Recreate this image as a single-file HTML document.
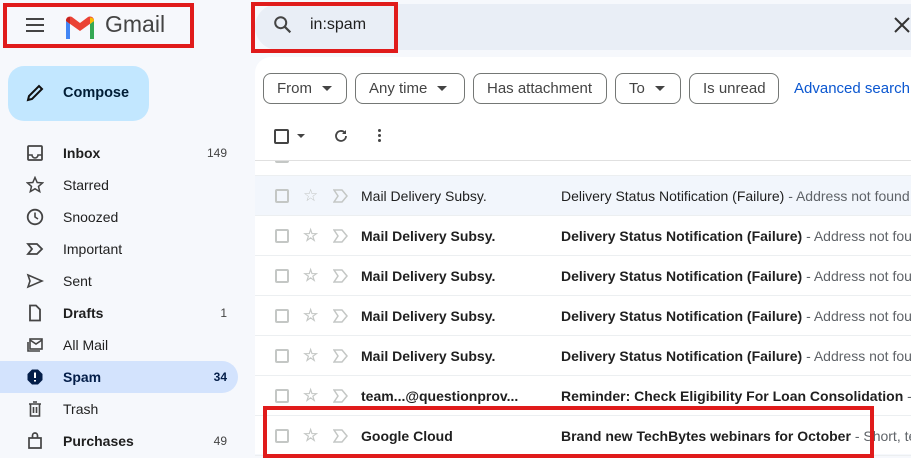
<!DOCTYPE html>
<html><head><style>
*{margin:0;padding:0;box-sizing:border-box}
body{width:911px;height:454px;overflow:hidden;background:#f6f8fc;font-family:"Liberation Sans",Arial,sans-serif;color:#1f1f1f;position:relative}
.abs{position:absolute}
.red{position:absolute;border:4px solid #e01b1b}
.nav{position:absolute;left:0;width:238px;height:32px;display:flex;align-items:center;font-size:14px}
.nav .ic{position:absolute;left:26px;top:7px;width:18px;height:18px}
.nav .t{position:absolute;left:63px}
.nav .c{position:absolute;right:11px;font-size:12px;color:#444}
.b{font-weight:bold}
.chip{position:absolute;top:73px;height:31px;border:1px solid #747775;border-radius:8px;font-size:15px;color:#444;display:flex;align-items:center;padding-left:13px}
.chip .ar{width:0;height:0;border-left:5px solid transparent;border-right:5px solid transparent;border-top:5px solid #444;margin-left:10px}
.row{position:absolute;left:255px;width:656px;height:40px;border-bottom:1px solid #eceff1;font-size:14px;white-space:nowrap;overflow:hidden}
.row .cb{position:absolute;left:20px;top:13px;width:14px;height:14px;border:2px solid #c4c7c5;border-radius:2px}
.row .st{position:absolute;left:48px;top:11px;font-size:17px;color:#c4c7c5;line-height:17px}
.row .im{position:absolute;left:78px;top:12px}
.row .s{position:absolute;left:106px;top:12px}
.row .sub{position:absolute;left:306px;top:12px}
.row .g{color:#5f6368;font-weight:normal}
</style></head><body>
<div class="abs" style="left:26px;top:18px;width:18px;height:2px;background:#444;box-shadow:0 6px 0 #444,0 12px 0 #444"></div>
<svg class="abs" style="left:64px;top:15px" width="32" height="24" viewBox="0 0 32 24">
<path d="M2 24V6l4 3v15z" fill="#4285f4"/><path d="M26 24V9l4-3v18z" fill="#34a853"/>
<path d="M2 6l14 10 14-10v-1a4 4 0 0 0-6-3L16 8 8 2a4 4 0 0 0-6 3z" fill="#ea4335"/>
<path d="M26 9V2.5a4 4 0 0 1 4 2.5V6z" fill="#fbbc04"/><path d="M2 6V5a4 4 0 0 1 4-3v7z" fill="#c5221f"/>
</svg>
<div class="abs" style="left:105px;top:11px;font-size:23px;color:#444">Gmail</div>
<div class="abs" style="left:255px;top:4px;width:656px;height:46px;background:#e9eef6;border-radius:23px 0 0 23px"></div>
<svg class="abs" style="left:272px;top:14px" width="22" height="22" viewBox="0 0 24 24"><circle cx="9.5" cy="9.5" r="6" fill="none" stroke="#444" stroke-width="2.2"/><path d="M14 14l6 6" stroke="#444" stroke-width="2.4"/></svg>
<div class="abs" style="left:310px;top:16px;font-size:16px;color:#1f1f1f">in:spam</div>
<svg class="abs" style="left:893px;top:16px" width="18" height="18" viewBox="0 0 18 18"><path d="M2 2l14 14M16 2L2 16" stroke="#333" stroke-width="2"/></svg>
<div class="abs" style="left:8px;top:66px;width:141px;height:55px;background:#c2e7ff;border-radius:16px"></div>
<svg class="abs" style="left:25px;top:83px" width="20" height="20" viewBox="0 0 20 20"><path d="M3 17l1-4L14 3l3 3L7 16z" fill="none" stroke="#111" stroke-width="2"/></svg>
<div class="abs" style="left:63px;top:85px;font-size:14.5px;font-weight:bold;color:#001d35">Compose</div>
<div class="abs" style="left:0;top:361px;width:238px;height:32px;background:#d3e3fd;border-radius:0 16px 16px 0"></div>
<div class="nav" style="top:137px"><svg class="ic" viewBox="0 0 18 18"><rect x="2" y="2" width="14" height="14" rx="1" fill="none" stroke="#444" stroke-width="1.8"/><path d="M2 11h4a3 3 0 0 0 6 0h4" fill="none" stroke="#444" stroke-width="1.6"/></svg><span class="t b">Inbox</span><span class="c">149</span></div>
<div class="nav" style="top:169px"><svg class="ic" viewBox="0 0 18 18"><path d="M9 1.5l2.2 5 5.3.4-4 3.5 1.2 5.2L9 12.8l-4.7 2.8 1.2-5.2-4-3.5 5.3-.4z" fill="none" stroke="#444" stroke-width="1.5"/></svg><span class="t">Starred</span></div>
<div class="nav" style="top:201px"><svg class="ic" viewBox="0 0 18 18"><circle cx="9" cy="9" r="7.3" fill="none" stroke="#444" stroke-width="1.8"/><path d="M9 4.5V9l3 2" fill="none" stroke="#444" stroke-width="1.6"/></svg><span class="t">Snoozed</span></div>
<div class="nav" style="top:233px"><svg class="ic" viewBox="0 0 18 18"><path d="M2 4h9l5 5-5 5H2l4-5z" fill="none" stroke="#444" stroke-width="1.8"/></svg><span class="t">Important</span></div>
<div class="nav" style="top:265px"><svg class="ic" viewBox="0 0 18 18"><path d="M2 3l14 6-14 6 2-6z" fill="none" stroke="#444" stroke-width="1.6"/></svg><span class="t">Sent</span></div>
<div class="nav" style="top:297px"><svg class="ic" viewBox="0 0 18 18"><path d="M4 1.5h6l4 4v11H4z" fill="none" stroke="#444" stroke-width="1.8"/></svg><span class="t b">Drafts</span><span class="c">1</span></div>
<div class="nav" style="top:329px"><svg class="ic" viewBox="0 0 18 18"><rect x="4" y="3" width="12" height="10" fill="none" stroke="#444" stroke-width="1.6"/><path d="M4 4l6 4 6-4M2 6v9h12" fill="none" stroke="#444" stroke-width="1.6"/></svg><span class="t">All Mail</span></div>
<div class="nav" style="top:361px"><svg class="ic" viewBox="0 0 18 18"><path d="M6 1.5h6l4.5 4.5v6L12 16.5H6L1.5 12V6z" fill="#041e49"/><path d="M9 4.5v5.5M9 12v1.5" stroke="#fff" stroke-width="2"/></svg><span class="t b" style="color:#041e49">Spam</span><span class="c b" style="color:#041e49">34</span></div>
<div class="nav" style="top:393px"><svg class="ic" viewBox="0 0 18 18"><path d="M3 4h12M7 2h4M4.5 4v12h9V4M7.5 7v6M10.5 7v6" fill="none" stroke="#444" stroke-width="1.6"/></svg><span class="t">Trash</span></div>
<div class="nav" style="top:425px"><svg class="ic" viewBox="0 0 18 18"><path d="M3 6h12v10H3zM6.5 6V3.5a2.5 2.5 0 0 1 5 0V6" fill="none" stroke="#444" stroke-width="1.7"/></svg><span class="t b">Purchases</span><span class="c">49</span></div>
<div class="abs" style="left:255px;top:57px;width:656px;height:397px;background:#fff;border-radius:16px 0 0 0"></div>
<div class="chip" style="left:263px;width:84px">From<span class="ar"></span></div>
<div class="chip" style="left:355px;width:110px">Any time<span class="ar"></span></div>
<div class="chip" style="left:473px;width:134px">Has attachment</div>
<div class="chip" style="left:615px;width:66px">To<span class="ar"></span></div>
<div class="chip" style="left:689px;width:90px">Is unread</div>
<div class="abs" style="left:794px;top:80px;font-size:15px;color:#0b57d0;white-space:nowrap">Advanced search</div>
<div class="abs" style="left:274px;top:129px;width:15px;height:15px;border:2px solid #444;border-radius:2px"></div>
<div class="abs" style="left:297px;top:134px;border-left:4px solid transparent;border-right:4px solid transparent;border-top:4px solid #444"></div>
<svg class="abs" style="left:333px;top:128px" width="16" height="16" viewBox="0 0 16 16"><path d="M13 8a5 5 0 1 1-1.5-3.6" fill="none" stroke="#444" stroke-width="1.8"/><path d="M13 2v4H9z" fill="#444"/></svg>
<div class="abs" style="left:378px;top:129px;width:3px;height:3px;background:#444;border-radius:50%;box-shadow:0 5px 0 #444,0 10px 0 #444"></div>
<div class="row" style="top:136px;height:40px;color:#999;clip-path:inset(25px 0 0 0)"><span class="cb"></span><span class="st">☆</span></div>
<div class="abs" style="left:255px;top:160px;width:656px;height:1px;background:#e0e0e0"></div>
<div class="row" style="top:176px;background:#f2f6fc"><span class="cb"></span><span class="st">☆</span><svg class="im" width="16" height="16" viewBox="0 0 16 16"><path d="M1 2h8l5 6-5 6H1l4-6z" fill="none" stroke="#c4c7c5" stroke-width="1.5"/></svg><span class="s">Mail Delivery Subsy.</span><span class="sub">Delivery Status Notification (Failure) <span class="g">- Address not found</span></span></div>
<div class="row b" style="top:216px"><span class="cb"></span><span class="st">☆</span><svg class="im" width="16" height="16" viewBox="0 0 16 16"><path d="M1 2h8l5 6-5 6H1l4-6z" fill="none" stroke="#c4c7c5" stroke-width="1.5"/></svg><span class="s">Mail Delivery Subsy.</span><span class="sub">Delivery Status Notification (Failure) <span class="g">- Address not found</span></span></div>
<div class="row b" style="top:256px"><span class="cb"></span><span class="st">☆</span><svg class="im" width="16" height="16" viewBox="0 0 16 16"><path d="M1 2h8l5 6-5 6H1l4-6z" fill="none" stroke="#c4c7c5" stroke-width="1.5"/></svg><span class="s">Mail Delivery Subsy.</span><span class="sub">Delivery Status Notification (Failure) <span class="g">- Address not found</span></span></div>
<div class="row b" style="top:296px"><span class="cb"></span><span class="st">☆</span><svg class="im" width="16" height="16" viewBox="0 0 16 16"><path d="M1 2h8l5 6-5 6H1l4-6z" fill="none" stroke="#c4c7c5" stroke-width="1.5"/></svg><span class="s">Mail Delivery Subsy.</span><span class="sub">Delivery Status Notification (Failure) <span class="g">- Address not found</span></span></div>
<div class="row b" style="top:336px"><span class="cb"></span><span class="st">☆</span><svg class="im" width="16" height="16" viewBox="0 0 16 16"><path d="M1 2h8l5 6-5 6H1l4-6z" fill="none" stroke="#c4c7c5" stroke-width="1.5"/></svg><span class="s">Mail Delivery Subsy.</span><span class="sub">Delivery Status Notification (Failure) <span class="g">- Address not found</span></span></div>
<div class="row b" style="top:376px"><span class="cb"></span><span class="st">☆</span><svg class="im" width="16" height="16" viewBox="0 0 16 16"><path d="M1 2h8l5 6-5 6H1l4-6z" fill="none" stroke="#c4c7c5" stroke-width="1.5"/></svg><span class="s">team...@questionprov...</span><span class="sub">Reminder: Check Eligibility For Loan Consolidation <span class="g">- Don't</span></span></div>
<div class="row b" style="top:416px"><span class="cb"></span><span class="st">☆</span><svg class="im" width="16" height="16" viewBox="0 0 16 16"><path d="M1 2h8l5 6-5 6H1l4-6z" fill="none" stroke="#c4c7c5" stroke-width="1.5"/></svg><span class="s">Google Cloud</span><span class="sub">Brand new TechBytes webinars for October <span class="g">- Short, tech</span></span></div>
<div class="red" style="left:3px;top:3px;width:191px;height:45px"></div>
<div class="red" style="left:251px;top:2px;width:147px;height:51px"></div>
<div class="red" style="left:263px;top:406px;width:611px;height:52px"></div>
</body></html>
